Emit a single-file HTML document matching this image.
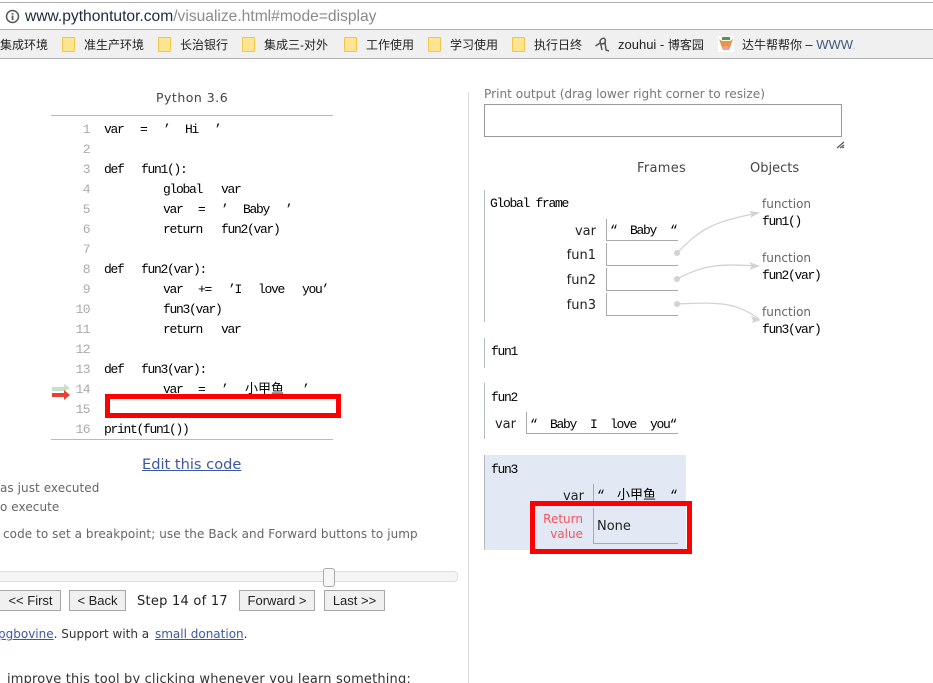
<!DOCTYPE html>
<html><head><meta charset="utf-8">
<style>
html,body{margin:0;padding:0;background:#fff;}
#r{position:relative;width:933px;height:683px;overflow:hidden;background:#fff;font-family:"DejaVu Sans","Liberation Sans",sans-serif;}
#r div,#r span.a,#r a.a{position:absolute;white-space:pre;}
.bm{font:12px/16px "Liberation Sans","Noto Sans CJK SC",sans-serif;color:#222;top:37px;}
.fo{top:37px;width:11px;height:13px;background:#ffe592;border:1px solid #f0c64a;border-radius:1px;}
.c{font:13px/16px "Liberation Mono","Noto Sans CJK SC",monospace;letter-spacing:-1.3px;color:#000;}
.n{font:13px/16px "Liberation Mono",monospace;letter-spacing:-.6px;color:#aaa;text-align:right;width:30px;left:60px;}
.s{font:12px/15px "DejaVu Sans",sans-serif;color:#666;letter-spacing:.07px;}
.l{font:13px/16px "DejaVu Sans",sans-serif;color:#222;text-align:right;}
.cell{border-left:1px solid #aaa;border-bottom:1px solid #aaa;box-sizing:border-box;}
.fb{border-left:1px solid #b0bcc0;width:0;left:484px;}
.btn{box-sizing:border-box;height:21px;top:590px;background:#f0f0f0;border:1px solid #a6a6a6;font:13px/19px "Liberation Sans",sans-serif;color:#222;text-align:center;}
.fn{font:12px/15px "DejaVu Sans",sans-serif;color:#666;left:762px;}
</style></head><body>
<div id="r">
<!-- browser chrome -->
<div style="left:0;top:2px;width:933px;height:1px;background:#b0b0b0"></div>
<div style="left:0;top:29px;width:933px;height:1px;background:#b0b0b0"></div>
<div style="left:0;top:30px;width:933px;height:28px;background:#f0f0f0"></div>
<div style="left:0;top:58px;width:933px;height:1px;background:#b0b0b0"></div>
<svg style="position:absolute;left:5px;top:9px" width="15" height="15" viewBox="0 0 15 15"><circle cx="7.5" cy="7.5" r="6" fill="none" stroke="#555" stroke-width="1.5"/><rect x="6.7" y="6.5" width="1.7" height="4.5" fill="#555"/><rect x="6.7" y="4" width="1.7" height="1.6" fill="#555"/></svg>
<div style="left:25px;top:8px;font:15.6px/18px 'Liberation Sans',sans-serif;color:#1b2a40">www.pythontutor.com<span style="color:#8a8a8a">/visualize.html#mode=display</span></div>

<div class="bm" style="left:0">集成环境</div>
<div class="fo" style="left:62px"></div><div class="bm" style="left:84px">准生产环境</div>
<div class="fo" style="left:158px"></div><div class="bm" style="left:180px">长治银行</div>
<div class="fo" style="left:242px"></div><div class="bm" style="left:264px">集成三-对外</div>
<div class="fo" style="left:344px"></div><div class="bm" style="left:366px">工作使用</div>
<div class="fo" style="left:428px"></div><div class="bm" style="left:450px">学习使用</div>
<div class="fo" style="left:512px"></div><div class="bm" style="left:534px">执行日终</div>
<svg style="position:absolute;left:595px;top:37px" width="15" height="15" viewBox="0 0 15 15"><path d="M0.500 9 L5 6 M7 13 L5 4 Q7 0.500 9.500 1.500 Q11.500 3.500 9 6.500 L6 7 M10 5 L11 13 L14 14" fill="none" stroke="#555" stroke-width="1.5"/></svg>
<div class="bm" style="left:618px;font-size:13px">zouhui - <span style="font-size:12px">博客园</span></div>
<svg style="position:absolute;left:718px;top:36px" width="16" height="16" viewBox="0 0 16 16"><rect width="16" height="16" fill="#fff"/><rect x="4" y="1" width="8" height="3" fill="#4a9a40"/><path d="M1 3 L4 5 L12 5 L15 3 L13 9 L11 14 L5 14 L3 9Z" fill="#e8954a"/><ellipse cx="8" cy="12" rx="3" ry="2" fill="#f0a0a0"/></svg>
<div class="bm" style="left:742px;color:#222">达牛帮帮你 <span style="font-size:13px">– <span style="color:#3d5a80">WWW</span><span style="color:#bcc4cc">.</span></span></div>

<!-- left -->
<div style="left:156px;top:90px;font:12.5px/16px 'DejaVu Sans',sans-serif;color:#444;letter-spacing:.5px">Python 3.6</div>
<div style="left:51px;top:115px;width:282px;height:1px;background:#bbb"></div>
<div style="left:51px;top:439px;width:282px;height:1px;background:#bbb"></div>

<div class="n" style="top:122px">1</div><div class="n" style="top:142px">2</div><div class="n" style="top:162px">3</div><div class="n" style="top:182px">4</div><div class="n" style="top:202px">5</div><div class="n" style="top:222px">6</div><div class="n" style="top:242px">7</div><div class="n" style="top:262px">8</div><div class="n" style="top:282px">9</div><div class="n" style="top:302px">10</div><div class="n" style="top:322px">11</div><div class="n" style="top:342px">12</div><div class="n" style="top:362px">13</div><div class="n" style="top:382px">14</div><div class="n" style="top:402px">15</div><div class="n" style="top:422px">16</div>

<div class="c" style="left:104px;top:122px">var</div><div class="c" style="left:140px;top:122px">=</div><div class="c" style="left:163px;top:122px">’</div><div class="c" style="left:185px;top:122px">Hi</div><div class="c" style="left:214px;top:122px">’</div>
<div class="c" style="left:104px;top:162px">def</div><div class="c" style="left:141px;top:162px">fun1():</div>
<div class="c" style="left:163px;top:182px">global</div><div class="c" style="left:221px;top:182px">var</div>
<div class="c" style="left:163px;top:202px">var</div><div class="c" style="left:198px;top:202px">=</div><div class="c" style="left:221px;top:202px">’</div><div class="c" style="left:243px;top:202px">Baby</div><div class="c" style="left:285px;top:202px">’</div>
<div class="c" style="left:163px;top:222px">return</div><div class="c" style="left:221px;top:222px">fun2(var)</div>
<div class="c" style="left:104px;top:262px">def</div><div class="c" style="left:141px;top:262px">fun2(var):</div>
<div class="c" style="left:163px;top:282px">var</div><div class="c" style="left:198px;top:282px">+=</div><div class="c" style="left:228px;top:282px">’I</div><div class="c" style="left:258px;top:282px">love</div><div class="c" style="left:302px;top:282px">you’</div>
<div class="c" style="left:163px;top:302px">fun3(var)</div>
<div class="c" style="left:163px;top:322px">return</div><div class="c" style="left:221px;top:322px">var</div>
<div class="c" style="left:104px;top:362px">def</div><div class="c" style="left:141px;top:362px">fun3(var):</div>
<div class="c" style="left:163px;top:382px">var</div><div class="c" style="left:198px;top:382px">=</div><div class="c" style="left:221px;top:382px">’</div><div class="c" style="left:245px;top:382px;letter-spacing:0">小甲鱼</div><div class="c" style="left:302px;top:382px">’</div>
<div class="c" style="left:104px;top:422px">print(fun1())</div>

<svg style="position:absolute;left:52px;top:384px" width="18" height="17" viewBox="0 0 18 17"><path d="M0 3h12V0l6 4-6 4V7H0z" fill="#c5e2c8"/><path d="M0 9h12V6l6 5-6 5v-3H0z" fill="#e93f34"/></svg>
<div style="left:105px;top:394px;width:226px;height:14px;border:5px solid #f00"></div>

<a class="a" style="left:142px;top:456px;font:14.6px/18px 'DejaVu Sans',sans-serif;color:#3d58a2;text-decoration:underline">Edit this code</a>
<div class="s" style="left:0;top:481px">as just executed</div>
<div class="s" style="left:0;top:500px">o execute</div>
<div class="s" style="left:3px;top:527px">code to set a breakpoint; use the Back and Forward buttons to jump</div>

<div style="left:-10px;top:571px;width:466px;height:9px;background:#f5f5f5;border:1px solid #ddd;border-radius:4px"></div>
<div style="left:323px;top:568px;width:10px;height:17px;background:#f6f6f6;border:1px solid #aaa;border-radius:3px"></div>

<div class="btn" style="left:-10px;width:71px;padding-left:10px">&lt;&lt; First</div>
<div class="btn" style="left:69px;width:57px">&lt; Back</div>
<div style="left:137px;top:594px;font:13px/16px 'DejaVu Sans',sans-serif;color:#222;letter-spacing:.25px">Step 14 of 17</div>
<div class="btn" style="left:239px;width:76px">Forward &gt;</div>
<div class="btn" style="left:324px;width:61px">Last &gt;&gt;</div>

<div style="left:-2px;top:627px;font:12px/15px 'DejaVu Sans',sans-serif;color:#333"><span style="color:#3d58a2;text-decoration:underline">pgbovine</span>. Support with a <span style="color:#3d58a2;text-decoration:underline;margin-left:2px">small donation</span>.</div>
<div style="left:7px;top:672px;font:13px/16px 'DejaVu Sans',sans-serif;color:#333;letter-spacing:.17px">improve this tool by clicking whenever you learn something:</div>

<div style="left:468px;top:92px;width:1px;height:591px;background:#ddd"></div>

<!-- right -->
<div style="left:484px;top:86px;font:12.15px/16px 'DejaVu Sans',sans-serif;color:#777">Print output (drag lower right corner to resize)</div>
<div style="left:484px;top:104px;width:356px;height:31px;border:1px solid #999;background:#fff"></div>
<svg style="position:absolute;left:836px;top:141px" width="9" height="8" viewBox="0 0 9 8"><path d="M1 7 L8 1 M4 7 L8 4 M6.5 7 L8 6" stroke="#555" stroke-width="1.2" fill="none"/></svg>
<div style="left:637px;top:161px;font:13px/16px 'DejaVu Sans',sans-serif;color:#444;letter-spacing:.3px">Frames</div>
<div style="left:750px;top:161px;font:13px/16px 'DejaVu Sans',sans-serif;color:#444">Objects</div>

<div class="fb" style="top:190px;height:132px"></div>
<div class="c" style="left:490px;top:196px">Global frame</div>
<div class="l" style="left:540px;width:56px;top:224px">var</div>
<div class="l" style="left:540px;width:56px;top:248px">fun1</div>
<div class="l" style="left:540px;width:56px;top:273px">fun2</div>
<div class="l" style="left:540px;width:56px;top:298px">fun3</div>
<div class="cell" style="left:606px;top:219px;width:72px;height:22px"></div>
<div class="cell" style="left:606px;top:243px;width:72px;height:23px"></div>
<div class="cell" style="left:606px;top:268px;width:72px;height:23px"></div>
<div class="cell" style="left:606px;top:293px;width:72px;height:23px"></div>
<div class="c" style="left:610px;top:223px">“</div><div class="c" style="left:630px;top:223px">Baby</div><div class="c" style="left:670px;top:223px">“</div>

<div class="fn" style="top:197px">function</div><div class="c" style="left:762px;top:214px">fun1()</div>
<div class="fn" style="top:251px">function</div><div class="c" style="left:762px;top:268px">fun2(var)</div>
<div class="fn" style="top:305px">function</div><div class="c" style="left:762px;top:322px">fun3(var)</div>

<svg style="position:absolute;left:0;top:0" width="933" height="683" viewBox="0 0 933 683">
<g fill="none" stroke="#d2d2d2" stroke-width="1.3">
<path d="M677 253 C700 230 710 222 758 213"/>
<path d="M677 279 C705 264 720 264 758 266"/>
<path d="M677 304 C720 302 735 302 759 319"/>
</g>
<g fill="#d2d2d2">
<circle cx="677" cy="253" r="3"/><circle cx="677" cy="279" r="3"/><circle cx="677" cy="304" r="3"/>
<path d="M760 212.500 L749 211 L752 214 L750 218Z"/>
<path d="M760 266 L749 262 L752 266 L749 270Z"/>
<path d="M761 320 L751 316 L753 320 L752 323Z"/>
</g>
</svg>

<div class="fb" style="top:338px;height:30px"></div>
<div class="c" style="left:491px;top:344px">fun1</div>

<div class="fb" style="top:383px;height:56px"></div>
<div class="c" style="left:491px;top:390px">fun2</div>
<div class="l" style="left:490px;width:26px;top:417px;color:#222">var</div>
<div class="cell" style="left:526px;top:412px;width:152px;height:22px"></div>
<div class="c" style="left:530px;top:417px">“</div><div class="c" style="left:550px;top:417px">Baby</div><div class="c" style="left:590px;top:417px">I</div><div class="c" style="left:610px;top:417px">love</div><div class="c" style="left:650px;top:417px">you“</div>

<div style="left:484px;top:455px;width:202px;height:95px;background:#e2e9f4;border-left:1px solid #b0bcc0;box-sizing:border-box"></div>
<div class="c" style="left:491px;top:462px">fun3</div>
<div class="l" style="left:540px;width:44px;top:489px">var</div>
<div style="left:593px;top:484px;width:1px;height:18px;background:#aaa"></div>
<div class="c" style="left:597px;top:488px">“</div><div class="c" style="left:617px;top:488px;letter-spacing:0">小甲鱼</div><div class="c" style="left:670px;top:488px">“</div>
<div class="cell" style="left:593px;top:508px;width:85px;height:36px"></div>
<div style="left:530px;top:501px;width:152px;height:43px;border:5px solid #f00"></div>
<div style="left:530px;top:512px;width:53px;text-align:right;font:12px/15px 'DejaVu Sans',sans-serif;color:#f0535c">Return</div>
<div style="left:530px;top:527px;width:53px;text-align:right;font:12px/15px 'DejaVu Sans',sans-serif;color:#f0535c">value</div>
<div style="left:597px;top:519px;font:13px/15px 'DejaVu Sans',sans-serif;color:#222">None</div>
</div>
</body></html>
